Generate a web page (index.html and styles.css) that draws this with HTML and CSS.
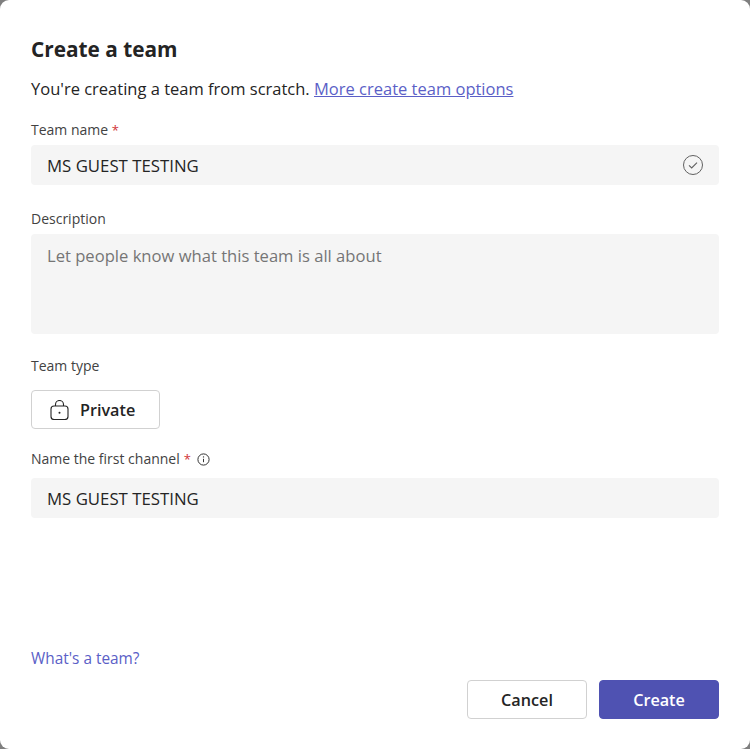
FILE: index.html
```html
<!DOCTYPE html>
<html lang="en">
<head>
<meta charset="utf-8">
<title>Create a team</title>
<link rel="stylesheet" href="styles.css">
</head>
<body>
<main class="dialog">
  <h1 class="title">Create a team</h1>
  <p class="intro">You're creating a team from scratch. <a class="link" href="#">More create team options</a></p>

  <div class="label label-name">Team name <span class="req">*</span></div>
  <div class="field">
    <span>MS GUEST TESTING</span>
    <svg class="check" width="20" height="20" viewBox="0 0 20 20" fill="none" stroke="#616161"><circle cx="10" cy="10" r="9.5"/><path d="M6 10.4l2.7 2.6L14 7.6" stroke-width="1.1"/></svg>
  </div>

  <div class="label label-desc">Description</div>
  <div class="textarea">Let people know what this team is all about</div>

  <div class="label label-type">Team type</div>
  <button class="btn type-btn" type="button">
    <svg width="19" height="20" viewBox="0 0 19 20" fill="none" stroke="#242424" stroke-width="1.1"><rect x="1" y="6" width="17" height="13.5" rx="3"/><path d="M5.5 6V4.5a4 4 0 0 1 8 0V6"/><circle cx="9.5" cy="12.7" r="1" fill="#242424" stroke="none"/></svg>
    <span>Private</span>
  </button>

  <div class="label label-channel">Name the first channel <span class="req">*</span>
    <svg class="info" width="13" height="13" viewBox="0 0 13 13" fill="none" stroke="#333"><circle cx="6.5" cy="6.5" r="5.6"/><path d="M6.5 5.8v3.4"/><circle cx="6.5" cy="3.9" r=".7" fill="#333" stroke="none"/></svg>
  </div>
  <div class="field"><span>MS GUEST TESTING</span></div>

  <div class="spacer"></div>
  <a class="help" href="#">What's a team?</a>
  <div class="actions">
    <button class="btn action" type="button">Cancel</button>
    <button class="btn action primary" type="button">Create</button>
  </div>
</main>
</body>
</html>
```
FILE: styles.css
```css
* { box-sizing: border-box; }
html, body { margin: 0; height: 100%; background: #7f7f7f; }
body { font-family: "Open Sans", "Noto Sans", sans-serif; color: #242424; overflow: hidden; }
.dialog {
  width: 750px; height: 749px; background: #fff; border-radius: 9px;
  padding: 35px 31px 30px; display: flex; flex-direction: column;
}
.title { margin: 0; font-size: 20.8px; line-height: 28px; font-weight: 700; }
.intro { margin: 14px 0 0; font-size: 16.5px; line-height: 24px; }
.link { color: #5b5fc7; text-decoration: underline; }
.label { font-size: 14px; line-height: 20px; color: #424242; }
.label-name { margin-top: 19px; }
.label-desc { margin-top: 24px; }
.label-type { margin-top: 22px; }
.label-channel { margin-top: 20px; display: flex; align-items: center; gap: 4px; }
.req { color: #d13438; font-size: 13px; }
.info { margin-left: 2px; }
.field {
  margin-top: 5px; height: 40px; background: #f5f5f5; border-radius: 4px;
  padding: 0 16px; display: flex; align-items: center; justify-content: space-between;
  font-size: 16.8px;
}
.label-channel + .field { margin-top: 9px; }
.textarea {
  margin-top: 5px; height: 100px; background: #f5f5f5; border-radius: 4px;
  padding: 10px 16px; font-size: 16.6px; line-height: 24px; color: #757575;
}
.btn {
  font-family: inherit; font-size: 16.2px; font-weight: 600; color: #242424; background: #fff;
  border: 1px solid #d1d1d1; border-radius: 4px; height: 39px; padding: 0;
  display: inline-flex; align-items: center; justify-content: center;
}
.type-btn { margin-top: 14px; width: 129px; gap: 11px; justify-content: flex-start; padding-left: 18px; }
.spacer { flex: 1; }
.help { font-size: 15.4px; line-height: 20px; color: #5b5fc7; text-decoration: none; }
.actions { margin-top: 11px; display: flex; justify-content: flex-end; gap: 12px; }
.action { width: 120px; }
.primary { background: #4f52b2; border-color: #4f52b2; color: #fff; }
```
